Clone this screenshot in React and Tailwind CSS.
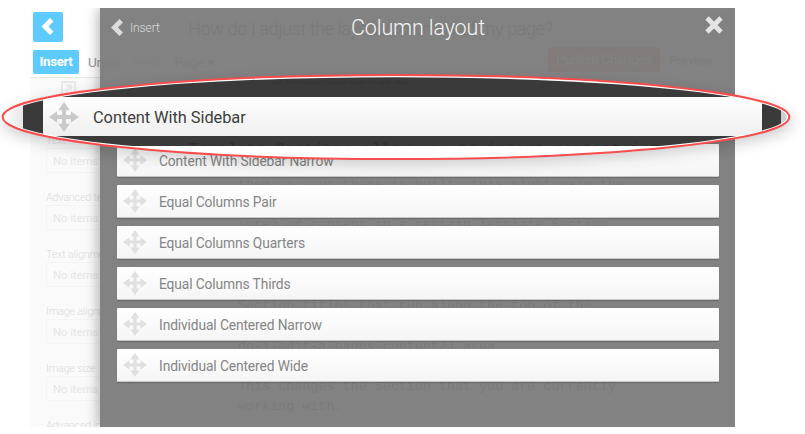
import React from "react";

const layouts = [
  "Content With Sidebar Narrow",
  "Equal Columns Pair",
  "Equal Columns Quarters",
  "Equal Columns Thirds",
  "Individual Centered Narrow",
  "Individual Centered Wide",
];

const fields = ["Text", "Advanced text", "Text alignment", "Image alignment", "Image size", "Advanced image"];

const copy = [
  "them on your theme is built, this might gain the",
  "",
  "sure? of content in a certain Template Section",
  "",
  "",
  "",
  "Section titles that run along the top of the",
  "",
  "do-i-edit-a-pages-content/) area",
  "",
  "This changes the Section that you are currently",
  "working with.",
];

function MoveIcon({ className }) {
  return (
    <svg viewBox="0 0 30 30" className={className} fill="currentColor">
      <path d="M15 0l5.8 8.2h-3.8v4.8h4.8V9.2L30 15l-8.2 5.8V17H17v4.8h3.8L15 30l-5.8-8.2H13V17H8.2v3.8L0 15l8.2-5.8V13H13V8.2H9.2z" />
    </svg>
  );
}

function BackIcon({ className }) {
  return (
    <svg viewBox="0 0 12 16" className={className} fill="none" stroke="currentColor" strokeWidth="4.6">
      <path d="M10 1.6L3.6 8l6.4 6.4" />
    </svg>
  );
}

function Editor() {
  return (
    <div className="flex h-full flex-col bg-white">
      <div className="flex h-[35px] shrink-0 items-center pt-1 pl-[3px]">
        <div className="-mt-[2px] flex h-[30px] w-[30px] items-center justify-center rounded-[2px] bg-[#5dcbff] text-white">
          <BackIcon className="-ml-0.5 h-[17px] w-[13px]" />
        </div>
        <div className="ml-[125px] mt-0.5 whitespace-nowrap text-[18.2px] font-light tracking-[-0.44px] text-[#222]">
          How do I adjust the layout/columns of my page?
        </div>
        <div className="ml-auto mr-1 h-[29px] w-[29px] bg-[#e4e4e4]" />
      </div>
      <div className="flex h-[35px] shrink-0 items-start border-b border-[#e6e6e6] pl-[3px] pt-[7px] text-[13.6px] text-[#999]">
        <div className="flex h-6 w-[46px] items-center justify-center rounded-[2px] bg-[#5dcbff] text-[13.3px] font-bold tracking-[-0.35px] text-white">
          Insert
        </div>
        <div className="ml-[9px] tracking-[-0.3px] leading-6">Undo</div>
        <div className="ml-[13px] tracking-[-0.3px] leading-6 text-[#bbb]">Redo</div>
        <div className="ml-[13px] tracking-[-0.3px] leading-6 text-[#777]">Page ▾</div>
        <div className="ml-auto -mt-[3px] flex h-[25px] w-[112px] items-center justify-center rounded-[2px] bg-[#e07a48] text-white">
          <span className="tracking-[-0.4px]">Publish Changes</span>
        </div>
        <div className="ml-[9px] mr-[22px] -mt-[2px] tracking-[-0.5px] leading-6 text-[#777]">Preview</div>
      </div>
      <div className="flex min-h-0 grow">
        <div className="w-[146px] shrink-0 overflow-hidden bg-[#fafafa] pl-4">
          <svg viewBox="0 0 16 16" className="ml-[15px] mt-[3px] h-[15px] w-[15px]" fill="none" stroke="#e8e8e8" strokeWidth="2">
            <path d="M1 1h14v14H1zM5 11l6-6M6 5h5v5" />
          </svg>
          <div className="mt-[38px]">
            {fields.map((f) => (
              <div key={f} className="h-[57px] whitespace-nowrap">
                <div className="h-[13px] text-[10.8px] leading-[13px] font-light tracking-[-0.2px] text-[#dadada]">{f}</div>
                <div className="mt-[1px] h-[25px] border border-[#f4f4f4] pl-1.5 text-[11.4px] leading-[25px] tracking-[-0.1px] text-[#e6e6e6]">
                  No items
                </div>
              </div>
            ))}
          </div>
        </div>
        <div className="overflow-hidden whitespace-pre pl-[62px] pt-[97px] font-['Liberation_Mono'] text-[13.4px] leading-[20.2px] text-[#444]">
          {copy.map((line, i) => (
            <div key={i} className="h-[20.2px]">{line}</div>
          ))}
        </div>
      </div>
    </div>
  );
}

function LayoutPanel() {
  return (
    <div className="absolute inset-y-0 right-0 w-[635px] bg-[rgba(124,124,124,0.955)] shadow-[-2px_0_12px_rgba(0,0,0,0.3)]">
      <div className="grid h-10 grid-cols-3 items-center px-[10px]">
        <div className="-mt-[2px] flex items-center gap-[6px] text-[12px] text-[#dcdcdc]">
          <BackIcon className="h-[17px] w-[14px]" />
          <span className="mt-px font-light tracking-[-0.1px]">Insert</span>
        </div>
        <div className="ml-px text-center text-[21.5px] font-light tracking-[-0.15px] whitespace-nowrap text-[#f6f6f6]">Column layout</div>
        <svg viewBox="0 0 18 18" className="-mt-[6px] mr-[2px] h-[18px] w-[18px] justify-self-end" stroke="#e4e4e4" strokeWidth="4.8">
          <path d="M2 2l14 14M16 2L2 16" />
        </svg>
      </div>
      <div className="mr-4 ml-[17px] mt-24 flex flex-col gap-2">
        {layouts.map((name) => (
          <div
            key={name}
            className="flex h-[33px] items-center rounded-[1px] border-b border-[#c8c8c8] bg-linear-to-b from-white to-[#f5f5f5] pl-[6px] shadow-[0_1px_1px_rgba(0,0,0,0.2)]"
          >
            <MoveIcon className="h-6 w-6 text-[#e0e0e0]" />
            <span className="ml-3 mt-[2px] text-[13.8px] tracking-[-0.12px] text-[#858585]">{name}</span>
          </div>
        ))}
      </div>
    </div>
  );
}

function Lens() {
  return (
    <>
      <svg viewBox="0 0 805 434" className="absolute inset-0 h-full w-full">
        <defs>
          <filter id="soft" x="-10%" y="-50%" width="120%" height="200%">
            <feGaussianBlur stdDeviation="8" />
          </filter>
        </defs>
        <ellipse cx="397" cy="122" rx="395" ry="41" fill="#000" opacity=".21" filter="url(#soft)" />
      </svg>
      <div className="absolute left-[3px] top-[75px] flex h-[84px] w-[786px] [clip-path:ellipse(50%_50%)]">
        <div className="w-5 bg-linear-to-r from-white to-[#e6e6e6]" />
        <div className="flex w-[758px] flex-col">
          <div className="h-[22px] whitespace-nowrap bg-[#3a3a3a] pl-[247px] pt-[3px] font-['Liberation_Mono'] text-[5.3px] leading-[10px] text-[#333]">
            uses the original design ideas in your ideas
          </div>
          <div className="flex h-[39px] bg-[#3a3a3a] pl-5 pr-[19px]">
            <div className="flex grow items-center bg-linear-to-b from-white to-[#efefef] pl-[6px]">
              <MoveIcon className="h-[30px] w-[30px] text-[#c9c9c9]" />
              <span className="ml-[14px] mt-[3px] text-[16.4px] tracking-[-0.06px] text-[#3d3d3d]">Content With Sidebar</span>
            </div>
          </div>
          <div className="h-[10px] overflow-hidden whitespace-pre bg-[#3a3a3a] pl-[166px] pt-[5px] font-['Liberation_Mono'] text-[16px] leading-[18px] text-[#2f2f2f]">
            Template Sections allow you to insert content into
          </div>
          <div className="grow bg-white" />
        </div>
        <div className="grow bg-[#cfcfcf]" />
      </div>
      <svg viewBox="0 0 805 434" className="absolute inset-0 h-full w-full" fill="none">
        <ellipse cx="396" cy="117" rx="391.7" ry="40.6" stroke="#fff" strokeWidth="1.8" />
        <ellipse cx="396" cy="117" rx="393.3" ry="42.1" stroke="#f94d4d" strokeWidth="2" />
      </svg>
    </>
  );
}

export default function App() {
  return (
    <div className="relative h-[434px] w-[805px] overflow-hidden bg-white pl-[30px] pt-2 font-[Roboto,sans-serif]">
      <div className="relative h-[419px] w-[705px] overflow-hidden">
        <Editor />
        <LayoutPanel />
      </div>
      <Lens />
    </div>
  );
}
